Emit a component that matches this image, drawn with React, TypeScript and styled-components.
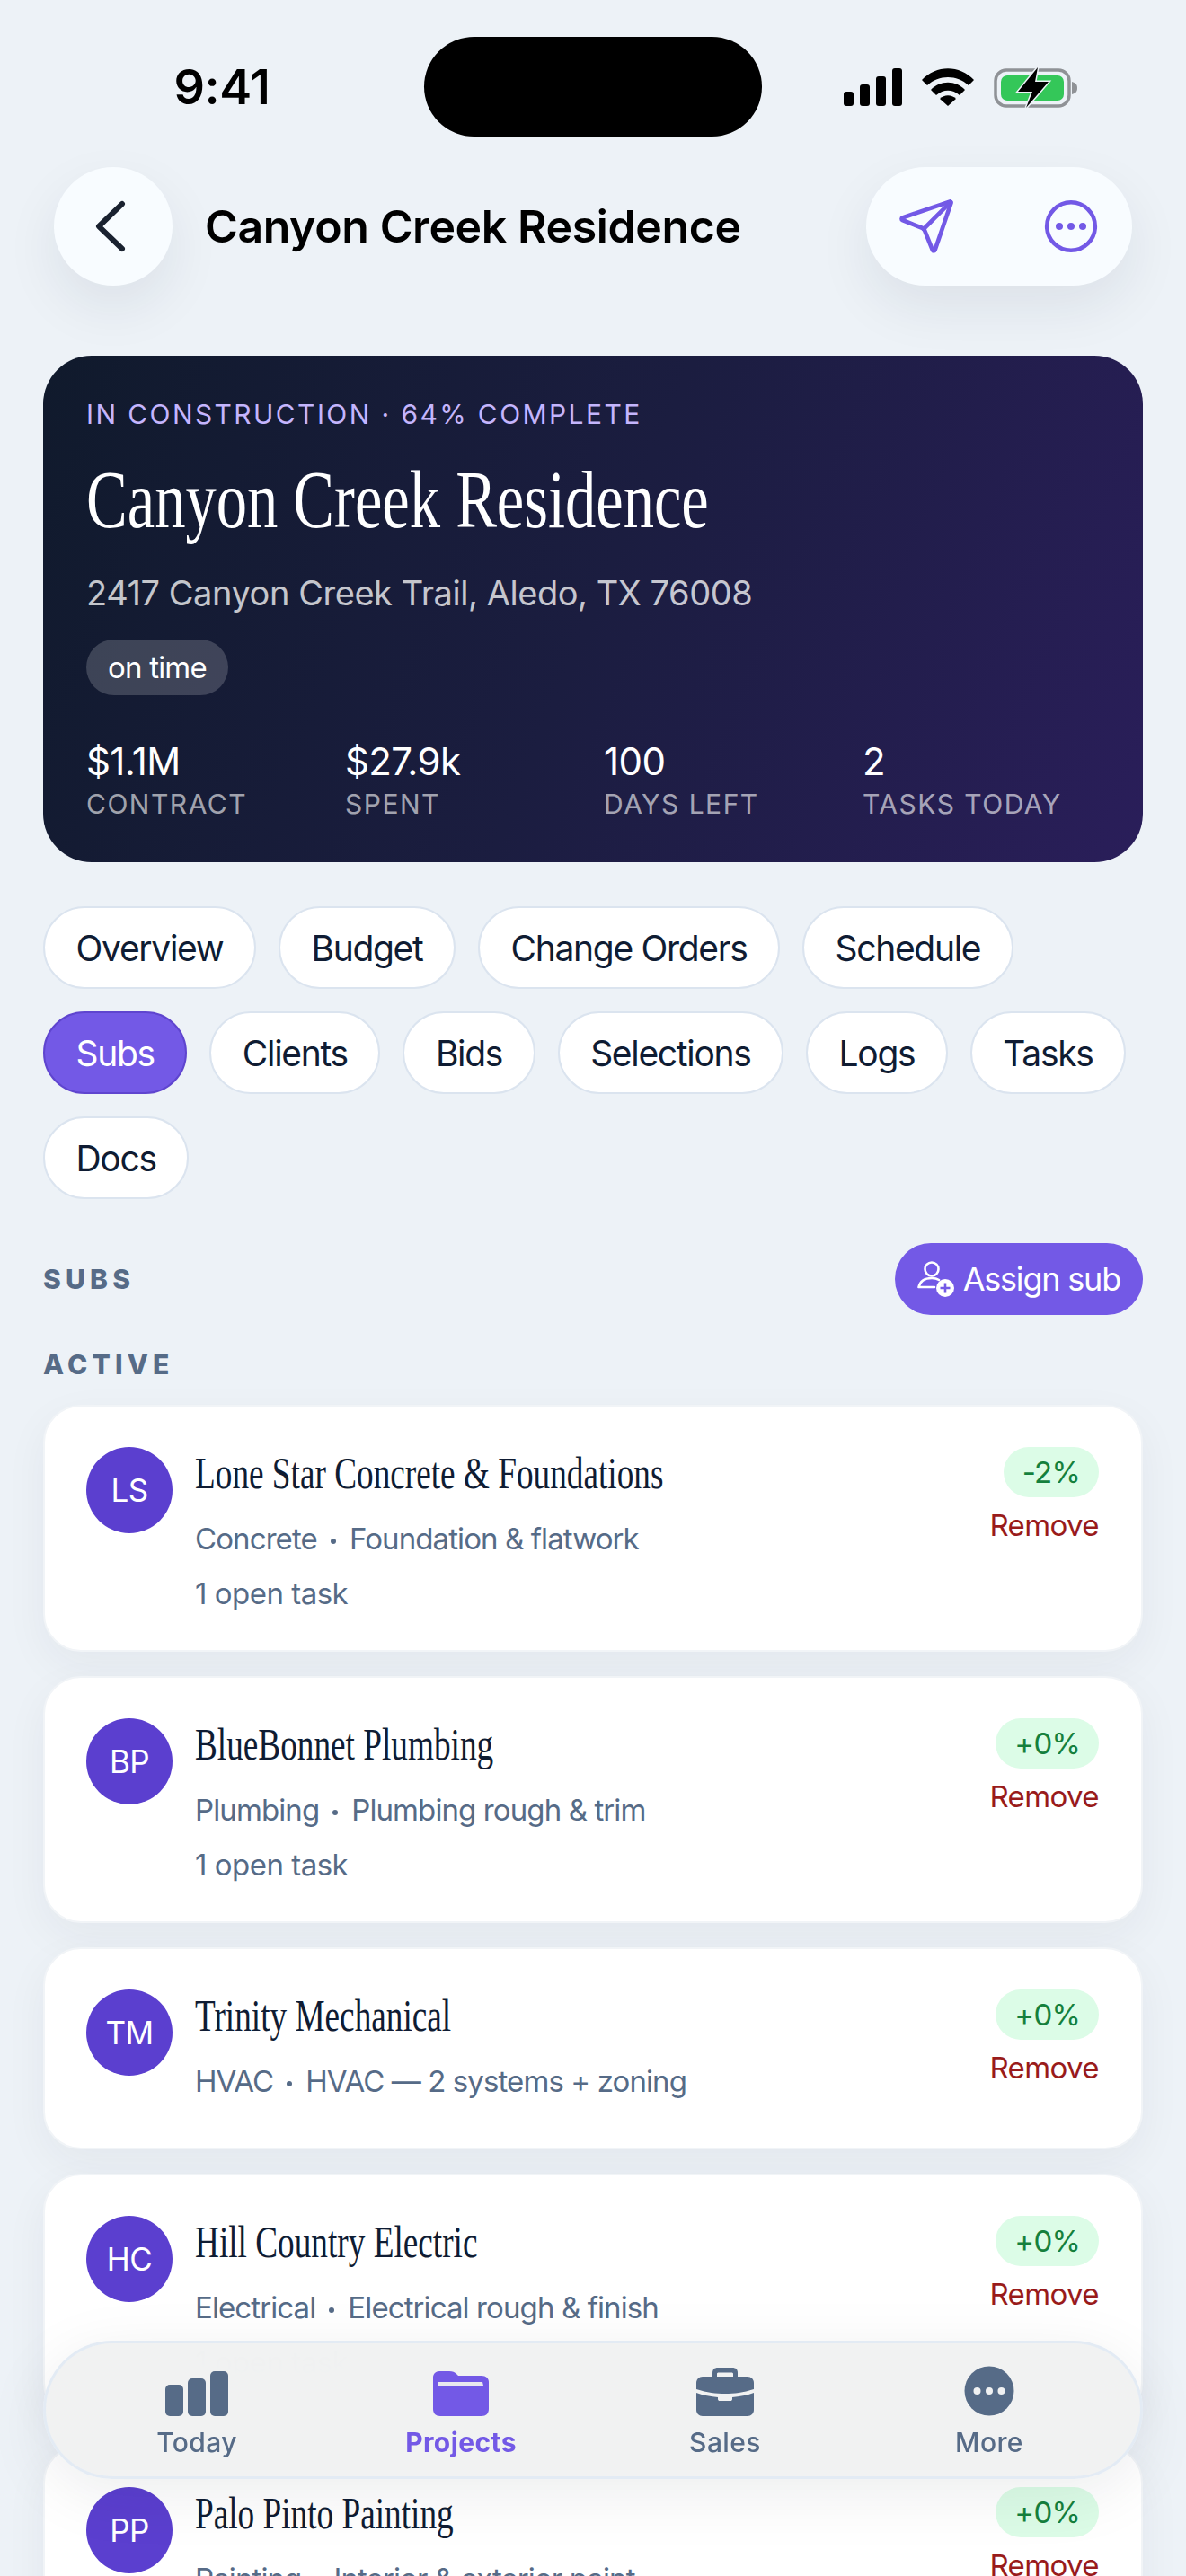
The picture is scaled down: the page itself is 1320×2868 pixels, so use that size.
import styled, { createGlobalStyle } from "styled-components";

const GlobalStyle = createGlobalStyle`
    html, body {
        margin: 0;
        padding: 0;
        background: #edf2f7;
    }
    * {
        box-sizing: border-box;
    }
`;

const PURPLE = "#7359e6";
const SLATE = "#566b87";
const SERIF = `"Liberation Serif", serif`;

const Phone = styled.div`
    position: relative;
    width: 1320px;
    height: 2868px;
    overflow: hidden;
    background: #edf2f7;
    font-family: Inter, "Liberation Sans", sans-serif;
    color: #0f1c33;
`;

const StatusBar = styled.div`
    display: grid;
    grid-template-columns: 472px 376px 1fr;
    align-items: center;
    padding-top: 41px;
    height: 152px;
`;

const Time = styled.div`
    font-size: 54px;
    font-weight: 600;
    color: #000;
    text-align: center;
    padding-left: 22px;
    letter-spacing: -0.5px;
`;

const Island = styled.div`
    height: 111px;
    background: #000;
    border-radius: 56px;
`;

const StatusIcons = styled.div`
    display: flex;
    align-items: center;
    justify-content: flex-end;
    gap: 22px;
    padding-right: 120px;
`;

const Header = styled.div`
    display: flex;
    align-items: center;
    margin: 34px 60px 0;
    height: 132px;
`;

const RoundButton = styled.div`
    display: flex;
    align-items: center;
    justify-content: center;
    width: 132px;
    height: 132px;
    border-radius: 50%;
    background: #f8fcff;
    box-shadow: 0 24px 60px rgba(30, 41, 59, 0.08);
`;

const HeaderTitle = styled.div`
    flex: 1;
    margin-left: 36px;
    font-size: 50px;
    font-weight: 600;
    color: #000;
    letter-spacing: -0.4px;
`;

const ActionPill = styled.div`
    display: flex;
    align-items: center;
    justify-content: space-between;
    width: 296px;
    height: 132px;
    padding: 0 38px 0 34px;
    border-radius: 66px;
    background: #f8fcff;
    box-shadow: 0 24px 60px rgba(30, 41, 59, 0.08);
`;

const Hero = styled.section`
    margin: 78px 48px 0;
    height: 564px;
    padding: 47px 48px 0;
    border-radius: 54px;
    color: #fff;
    background: linear-gradient(112deg, #101a2c 0%, #1b1d40 50%, #2a1e5a 100%);
`;

const Eyebrow = styled.div`
    font-size: 30px;
    line-height: 36px;
    letter-spacing: 2.4px;
    color: #c4b5fd;
`;

const SerifLine = styled.div`
    font-family: ${SERIF};
    white-space: nowrap;
    transform: scaleX(0.745);
    transform-origin: left center;
`;

const HeroTitle = styled(SerifLine)`
    margin-top: 25px;
    font-size: 92px;
    line-height: 104px;
    color: #fff;
`;

const Address = styled.div`
    margin-top: 29px;
    font-size: 38px;
    line-height: 46px;
    letter-spacing: -0.45px;
    color: rgba(255, 255, 255, 0.76);
`;

const StatusTag = styled.div`
    display: inline-flex;
    align-items: center;
    height: 62px;
    margin-top: 29px;
    padding: 0 24px;
    border-radius: 31px;
    font-size: 33px;
    letter-spacing: -0.8px;
    color: #fff;
    background: rgba(255, 255, 255, 0.18);
`;

const Stats = styled.div`
    display: grid;
    grid-template-columns: repeat(4, 1fr);
    column-gap: 24px;
    margin-top: 49px;
`;

const StatValue = styled.div`
    font-size: 42px;
    line-height: 50px;
    letter-spacing: -0.6px;
    color: #fff;
`;

const StatLabel = styled.div`
    margin-top: 4px;
    font-size: 30px;
    line-height: 36px;
    letter-spacing: 1.5px;
    color: rgba(255, 255, 255, 0.62);
`;

const Tabs = styled.div`
    display: flex;
    flex-wrap: wrap;
    gap: 25px;
    margin: 49px 48px 0;
`;

const Tab = styled.div<{ $active?: boolean }>`
    display: flex;
    align-items: center;
    height: 92px;
    padding: 0 34.5px;
    border-radius: 46px;
    font-size: 39px;
    letter-spacing: -1.3px;
    color: ${({ $active }) => ($active ? "#fff" : "#0f1c33")};
    background: ${({ $active }) => ($active ? PURPLE : "#fff")};
    border: 2px solid ${({ $active }) => ($active ? "#5f45cf" : "#dbe4ef")};
`;

const SectionRow = styled.div`
    display: flex;
    align-items: center;
    justify-content: space-between;
    margin: 49px 48px 0;
`;

const SectionLabel = styled.div`
    font-size: 30px;
    line-height: 36px;
    font-weight: 800;
    letter-spacing: 5.2px;
    color: ${SLATE};
`;

const ActiveLabel = styled(SectionLabel)`
    margin: 37px 48px 0;
`;

const AssignButton = styled.div`
    display: flex;
    align-items: center;
    gap: 9px;
    height: 80px;
    padding: 0 25px;
    border-radius: 40px;
    font-size: 36px;
    letter-spacing: -1.2px;
    color: #fff;
    background: ${PURPLE};
`;

const CardList = styled.div`
    display: flex;
    flex-direction: column;
    gap: 27px;
    margin: 27px 48px 0;
`;

const Card = styled.div`
    display: flex;
    align-items: flex-start;
    min-height: 225px;
    padding: 45px 47px 42px 46px;
    background: #fff;
    border: 2px solid #f1f4f7;
    border-radius: 42px;
    box-shadow: 0 16px 48px rgba(30, 41, 59, 0.05);
`;

const Avatar = styled.div`
    flex: none;
    display: flex;
    align-items: center;
    justify-content: center;
    width: 96px;
    height: 96px;
    border-radius: 50%;
    font-size: 35px;
    letter-spacing: -0.6px;
    color: #fff;
    background: #5b3fcf;
`;

const CardBody = styled.div`
    flex: 1;
    min-width: 0;
    margin-left: 25px;
`;

const CardName = styled(SerifLine)`
    margin-top: -1px;
    font-size: 50px;
    line-height: 60px;
    color: #0f1c33;
`;

const CardMeta = styled.div`
    display: flex;
    align-items: center;
    margin-top: 22px;
    font-size: 33px;
    line-height: 42px;
    letter-spacing: -0.9px;
    color: ${SLATE};
`;

const MetaDot = styled.span`
    width: 6px;
    height: 6px;
    margin: 5px 15px 0;
    border-radius: 50%;
    background: ${SLATE};
`;

const CardTasks = styled.div`
    margin-top: 19px;
    font-size: 33px;
    line-height: 42px;
    letter-spacing: -0.5px;
    color: ${SLATE};
`;

const CardSide = styled.div`
    flex: none;
    display: flex;
    flex-direction: column;
    align-items: flex-end;
`;

const Delta = styled.div`
    display: flex;
    align-items: center;
    height: 56px;
    padding: 0 21px;
    border-radius: 28px;
    font-size: 33px;
    letter-spacing: -0.8px;
    color: #15803d;
    background: #dcfce7;
`;

const RemoveLink = styled.div`
    margin-top: 11px;
    font-size: 33px;
    line-height: 40px;
    letter-spacing: -0.6px;
    color: #991b1b;
`;

const BottomNav = styled.nav`
    position: absolute;
    left: 48px;
    right: 48px;
    top: 2606px;
    height: 154px;
    display: grid;
    grid-template-columns: repeat(4, 1fr);
    padding: 0 21px;
    border: 3px solid rgba(226, 235, 245, 0.9);
    border-radius: 77px;
    background: rgba(241, 242, 242, 0.97);
    backdrop-filter: blur(24px);
    box-shadow: 0 16px 70px rgba(15, 23, 42, 0.08);
`;

const NavItem = styled.div<{ $active?: boolean }>`
    display: flex;
    flex-direction: column;
    align-items: center;
    padding-top: 25px;
    font-size: 30px;
    letter-spacing: 0.4px;
    font-weight: ${({ $active }) => ($active ? 700 : 500)};
    color: ${({ $active }) => ($active ? PURPLE : SLATE)};
`;

const NavIcon = styled.div`
    display: flex;
    align-items: flex-end;
    justify-content: center;
    height: 56px;
    margin-bottom: 11px;
`;

const SignalIcon = () => (
    <svg width="65" height="42" viewBox="0 0 65 42" fill="#000">
        <rect x="0" y="26" width="11" height="16" rx="3" />
        <rect x="18" y="18" width="11" height="24" rx="3" />
        <rect x="36" y="9" width="11" height="33" rx="3" />
        <rect x="54" y="0" width="11" height="42" rx="3" />
    </svg>
);

const WifiIcon = () => (
    <svg width="58" height="42" viewBox="0 0 58 42" fill="#000">
        <path d="M0 13 C16 -4 42 -4 58 13 L52 19 C39 7 19 7 6 19Z" />
        <path d="M10 24 C20 13 38 13 48 24 L42 30 C34 23 24 23 16 30Z" />
        <path d="M20 34 C25 29 33 29 38 34 L29 42Z" />
    </svg>
);

const BatteryIcon = () => (
    <svg width="94" height="48" viewBox="0 0 94 48">
        <rect x="2" y="5" width="82" height="40" rx="12" fill="none" stroke="#8f9296" strokeWidth="3.5" />
        <rect x="8" y="11" width="70" height="28" rx="7" fill="#34c759" />
        <path d="M87 18 C91 19 93 21 93 25 C93 29 91 31 87 32Z" fill="#8f9296" />
        <path d="M49 2 L27 29 H43 L36 47 L61 18 H46Z" fill="#000" stroke="#edf2f7" strokeWidth="3" paintOrder="stroke" />
    </svg>
);

const ChevronIcon = () => (
    <svg width="44" height="66" viewBox="0 0 44 66" fill="none" stroke="#1a2230" strokeWidth="6" strokeLinecap="round" strokeLinejoin="round">
        <path d="M32 8 L6 33 L32 58" />
    </svg>
);

const SendIcon = () => (
    <svg width="66" height="66" viewBox="0 0 24 24" fill="none" stroke={PURPLE} strokeWidth="1.7" strokeLinecap="round" strokeLinejoin="round">
        <path d="M14.536 21.686a.5.5 0 0 0 .937-.024l6.5-19a.496.496 0 0 0-.635-.635l-19 6.5a.5.5 0 0 0-.024.937l7.93 3.18a2 2 0 0 1 1.112 1.11z" />
        <path d="m21.854 2.147-10.94 10.939" />
    </svg>
);

const MoreCircleIcon = () => (
    <svg width="60" height="60" viewBox="0 0 60 60">
        <circle cx="30" cy="30" r="26.8" fill="none" stroke={PURPLE} strokeWidth="4.6" />
        <circle cx="17" cy="30" r="4" fill={PURPLE} />
        <circle cx="30" cy="30" r="4" fill={PURPLE} />
        <circle cx="43" cy="30" r="4" fill={PURPLE} />
    </svg>
);

const AddUserIcon = () => (
    <svg width="42" height="44" viewBox="0 0 42 44">
        <circle cx="16" cy="11" r="7.5" fill="none" stroke="#fff" strokeWidth="2.6" />
        <path d="M1.5 31 C3 24 9 21 16 21 C19 21 22 21.6 24 23 M1.5 31 H19" fill="none" stroke="#fff" strokeWidth="2.6" strokeLinecap="round" />
        <circle cx="31" cy="32" r="10" fill="#fff" />
        <path d="M31 26.5 V37.5 M25.5 32 H36.5" stroke={PURPLE} strokeWidth="2.6" />
    </svg>
);

const TodayGlyph = () => (
    <svg width="70" height="50" viewBox="0 0 70 50" fill={SLATE}>
        <rect x="0" y="15" width="20" height="35" rx="5" />
        <rect x="25" y="8" width="20" height="42" rx="5" />
        <rect x="50" y="0" width="20" height="50" rx="5" />
    </svg>
);

const FolderGlyph = () => (
    <svg width="62" height="50" viewBox="0 0 62 50">
        <path d="M0 7 C0 3 3 0 7 0 H18 C22 0 24 1 26 3 L28 5 H54 C59 5 62 8 62 12 V42 C62 47 59 50 54 50 H8 C3 50 0 47 0 42Z" fill={PURPLE} />
        <path d="M6 12 H55 L56 16 H6Z" fill="#e9e8ee" />
    </svg>
);

const BriefcaseGlyph = () => (
    <svg width="64" height="54" viewBox="0 0 64 54">
        <path d="M18 11 V6 C18 2 20 0 24 0 H40 C44 0 46 2 46 6 V11 H41 V7 C41 6 40.5 5.5 39 5.5 H25 C23.5 5.5 23 6 23 7 V11Z" fill={SLATE} />
        <path d="M0 17 C0 13 3 10 7 10 H57 C61 10 64 13 64 17 V24 C52 28 42 29 32 29 C22 29 12 28 0 24Z" fill={SLATE} />
        <path d="M0 28 C8 31 16 32 24 33 V35 C24 36.5 25 37 26 37 H38 C39 37 40 36.5 40 35 V33 C48 32 56 31 64 28 V47 C64 51 61 54 57 54 H7 C3 54 0 51 0 47Z" fill={SLATE} />
    </svg>
);

const MoreGlyph = () => (
    <svg width="56" height="56" viewBox="0 0 56 56">
        <circle cx="28" cy="28" r="27.5" fill={SLATE} />
        <circle cx="14.5" cy="28" r="4" fill="#f0f1f2" />
        <circle cx="28" cy="28" r="4" fill="#f0f1f2" />
        <circle cx="41.5" cy="28" r="4" fill="#f0f1f2" />
    </svg>
);

const tabs = ["Overview", "Budget", "Change Orders", "Schedule", "Subs", "Clients", "Bids", "Selections", "Logs", "Tasks", "Docs"];

const stats = [
    { value: "$1.1M", label: "CONTRACT" },
    { value: "$27.9k", label: "SPENT" },
    { value: "100", label: "DAYS LEFT" },
    { value: "2", label: "TASKS TODAY" },
];

type Sub = {
    initials: string;
    name: string;
    trade: string;
    scope: string;
    delta: string;
    tasks?: string;
};

const subs: Sub[] = [
    { initials: "LS", name: "Lone Star Concrete & Foundations", trade: "Concrete", scope: "Foundation & flatwork", delta: "-2%", tasks: "1 open task" },
    { initials: "BP", name: "BlueBonnet Plumbing", trade: "Plumbing", scope: "Plumbing rough & trim", delta: "+0%", tasks: "1 open task" },
    { initials: "TM", name: "Trinity Mechanical", trade: "HVAC", scope: "HVAC — 2 systems + zoning", delta: "+0%" },
    { initials: "HC", name: "Hill Country Electric", trade: "Electrical", scope: "Electrical rough & finish", delta: "+0%", tasks: "1 open task" },
    { initials: "PP", name: "Palo Pinto Painting", trade: "Painting", scope: "Interior & exterior paint", delta: "+0%" },
];

const SubCard = ({ sub }: { sub: Sub }) => (
    <Card>
        <Avatar>{sub.initials}</Avatar>
        <CardBody>
            <CardName>{sub.name}</CardName>
            <CardMeta>
                {sub.trade}
                <MetaDot />
                {sub.scope}
            </CardMeta>
            {sub.tasks && <CardTasks>{sub.tasks}</CardTasks>}
        </CardBody>
        <CardSide>
            <Delta>{sub.delta}</Delta>
            <RemoveLink>Remove</RemoveLink>
        </CardSide>
    </Card>
);

export default function App() {
    return (
        <Phone>
            <GlobalStyle />
            <StatusBar>
                <Time>9:41</Time>
                <Island />
                <StatusIcons>
                    <SignalIcon />
                    <WifiIcon />
                    <BatteryIcon />
                </StatusIcons>
            </StatusBar>

            <Header>
                <RoundButton>
                    <ChevronIcon />
                </RoundButton>
                <HeaderTitle>Canyon Creek Residence</HeaderTitle>
                <ActionPill>
                    <SendIcon />
                    <MoreCircleIcon />
                </ActionPill>
            </Header>

            <Hero>
                <Eyebrow>IN CONSTRUCTION · 64% COMPLETE</Eyebrow>
                <HeroTitle>Canyon Creek Residence</HeroTitle>
                <Address>2417 Canyon Creek Trail, Aledo, TX 76008</Address>
                <StatusTag>on time</StatusTag>
                <Stats>
                    {stats.map((s) => (
                        <div key={s.label}>
                            <StatValue>{s.value}</StatValue>
                            <StatLabel>{s.label}</StatLabel>
                        </div>
                    ))}
                </Stats>
            </Hero>

            <Tabs>
                {tabs.map((t) => (
                    <Tab key={t} $active={t === "Subs"}>{t}</Tab>
                ))}
            </Tabs>

            <SectionRow>
                <SectionLabel>SUBS</SectionLabel>
                <AssignButton>
                    <AddUserIcon />
                    Assign sub
                </AssignButton>
            </SectionRow>

            <ActiveLabel>ACTIVE</ActiveLabel>

            <CardList>
                {subs.map((s) => (
                    <SubCard key={s.initials} sub={s} />
                ))}
            </CardList>

            <BottomNav>
                <NavItem>
                    <NavIcon><TodayGlyph /></NavIcon>
                    Today
                </NavItem>
                <NavItem $active>
                    <NavIcon><FolderGlyph /></NavIcon>
                    Projects
                </NavItem>
                <NavItem>
                    <NavIcon><BriefcaseGlyph /></NavIcon>
                    Sales
                </NavItem>
                <NavItem>
                    <NavIcon><MoreGlyph /></NavIcon>
                    More
                </NavItem>
            </BottomNav>
        </Phone>
    );
}
